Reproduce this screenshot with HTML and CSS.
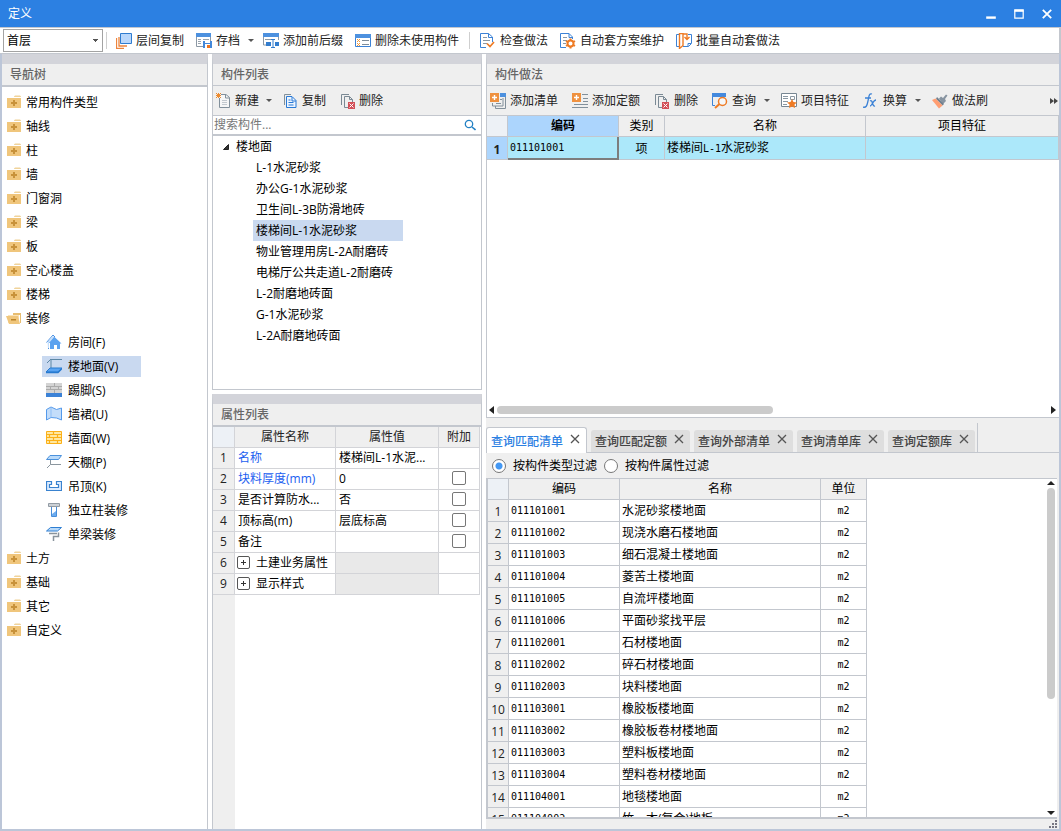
FILE: index.html
```html
<!DOCTYPE html>
<html lang="zh-CN">
<head>
<meta charset="utf-8">
<title>定义</title>
<link rel="stylesheet" href="styles.css">
</head>
<body>
<svg class="sprite" aria-hidden="true">
  <symbol id="folder" viewBox="0 0 16 16"><path d="M8 2.500l1-1h5l1 1V3H8z" fill="#f0d39b"/><path d="M1 4h14v10H1z" fill="#f0c67c"/><path d="M7 6h2v2h2v2H9v2H7v-2H5V8h2z" fill="#c8923a"/></symbol>
  <symbol id="folder-open" viewBox="0 0 16 16"><path d="M7 3h8v10h-1V5H7z" fill="#e8bd70"/><path d="M2 5h11v8H2z" fill="#fae3b8"/><path d="M0 6h12l2 8H3z" fill="#f0c67c"/><path d="M5 9h5v1.500H5z" fill="#b98328"/></symbol>
  <symbol id="house" viewBox="0 0 16 16"><path d="M.5 8.500L7 1l2 2M2.500 7v8" fill="none" stroke="#4a90e2"/><path d="M3 8L8 2.500 15.500 9.500H14V15h-3v-4H8v4H4V9H2z" fill="#5ca2ef"/><path d="M1.500 8L7 2l1 1-5 6v5H2z" fill="#c5dffc"/></symbol>
  <symbol id="floor" viewBox="0 0 16 16"><path d="M5 10V1.500h11M5 1L1 5" fill="none" stroke="#5d87a5"/><path d="M4 10h12l-4 4H0z" fill="#5aa4f3" stroke="#277ad0"/><path d="M0 14.500h12l4-4" fill="none" stroke="#277ad0" stroke-width="1.500"/></symbol>
  <symbol id="skirting" viewBox="0 0 16 16"><path d="M0 1h16v10H0z" fill="#d4d4d4"/><path d="M0 4.500h16M0 7.500h16M8.500 1v3M4.500 5v3M12.500 5v3M8.500 8v3" stroke="#aaa"/><path d="M0 11h16v4H0z" fill="#3c82d6"/></symbol>
  <symbol id="dado" viewBox="0 0 16 16"><path d="M.5 3.500L5 1l5.500 2.500 5-1.500v12l-5-2L5 11.500.5 14z" fill="#c3ddfa" stroke="#559aeb"/><path d="M5 1.500v10" stroke="#8fbff5"/></symbol>
  <symbol id="brick" viewBox="0 0 16 16"><path d="M.5 1.500h15v12H.5z" fill="#ffe8a2" stroke="#fbb018"/><path d="M1 4.500h14M1 7.500h14M1 10.500h14M7.500 1v3M3.500 5v3M11.500 5v3M7.500 8v3M3.500 11v3M11.500 11v3" stroke="#fbb018" stroke-width="1.200"/></symbol>
  <symbol id="ceiling" viewBox="0 0 16 16"><path d="M4 1.500h11.500l-3 4H.5z" fill="#b9dafa" stroke="#4b91dc"/><path d="M4.500 6v4.500H15M4.500 10.500L1 14" fill="none" stroke="#8b969e"/></symbol>
  <symbol id="suspend" viewBox="0 0 16 16"><path d="M.5 3.500h5v3h-2v3h9v-3h-2v-3h5v9H.5z" fill="#dcecff" stroke="#3982cf" stroke-width="1.200"/></symbol>
  <symbol id="column" viewBox="0 0 16 16"><path d="M2.500 1.500h11v3h-11z" fill="#ccd1d6" stroke="#929ba4"/><path d="M5.500 5v9.500h5V5" fill="#fff" stroke="#478dd8"/><path d="M6 12l4-3v5H6z" fill="#6dacef"/></symbol>
  <symbol id="beam" viewBox="0 0 16 16"><path d="M4.500 1.500h11l-4 3.500H.5z" fill="#b9dafa" stroke="#2e7ed2"/><path d="M3 7.500h8M12.500 6.500v4h-5V15" fill="none" stroke="#89939c" stroke-width="1.500"/></symbol>
  <symbol id="layers" viewBox="0 0 16 16"><path d="M.5 5v10.500H8M3 4v9h8" fill="none" stroke="#ed843c" stroke-width="1.300"/><path d="M4.500.5h11v10h-11z" fill="#b9d7fb" stroke="#2f7cd0"/></symbol>
  <symbol id="archive" viewBox="0 0 16 16"><path d="M0 0h15v4H0z" fill="#4d91df"/><path d="M.5 4v9.500H8M14.500 4v4" fill="none" stroke="#8c98a4"/><path d="M2 6.500h3M7 6.500h6M2 8.500h3M2 10.500h3" stroke="#9aa4ae"/><path d="M7 8h9v7H7z" fill="#4388d9"/><path d="M9 8h5v2H9z" fill="#fff"/><path d="M9 11h5v4H9z" fill="#fff"/><path d="M11 12h3v3h-3z" fill="#ef731c"/></symbol>
  <symbol id="affix" viewBox="0 0 16 16"><path d="M0 0h16v4H0z" fill="#4d91df"/><path d="M.5 4v8H3M15.500 4v3" fill="none" stroke="#8c98a4"/><path d="M2 6.500h6" stroke="#8c98a4"/><path d="M3 9h5v4H3zM12 9h4v4h-4z" fill="#337dce"/><path d="M8 6.500h4M8 14.500h4M10 6v9" stroke="#337dce"/></symbol>
  <symbol id="unused" viewBox="0 0 16 16"><path d="M.5 1.500h15v12H.5z" fill="#fff" stroke="#3c82d6"/><path d="M0 1h16v4H0z" fill="#4d91df"/><path d="M2 6l3 3M5 6L2 9M2 10l3 3M5 10l-3 3" stroke="#f19a3d"/><path d="M7 7.500h7M7 11.500h7" stroke="#7f8d99"/></symbol>
  <symbol id="check" viewBox="0 0 16 16"><path d="M12.500 9V4l-4-3.500h-8v14H6M8.500.5V4.500h4" fill="#fff" stroke="#3c82d6"/><path d="M3 4.500h4M3 7.500h7M3 10.500h4" stroke="#8c98a4"/><path d="M7 10.500l3 3 4-4.500" fill="none" stroke="#ee7b25" stroke-width="1.700"/></symbol>
  <symbol id="gear" viewBox="0 0 16 16"><path d="M12.500 6V4L9 .5H.5v14H6M9 .5V4.500h4" fill="#fff" stroke="#3c82d6"/><path d="M3 4.500h4M3 7.500h4M3 10.500h3" stroke="#8c98a4"/><path d="M10.500 5.500v10M6 8l9 5M15 8l-9 5" stroke="#ee7b25" stroke-width="2"/><circle cx="10.500" cy="10.500" r="3" fill="#fff" stroke="#ee7b25" stroke-width="2"/></symbol>
  <symbol id="batch" viewBox="0 0 16 16"><path d="M4 1.500H.5v12H4M12 1.500h3.500v9l-3 3H7" fill="#fff" stroke="#3c82d6"/><path d="M15 10.500h-3v3" fill="none" stroke="#3c82d6"/><path d="M3.500.5H7v12l-3.500 3zM7 1h4v5M8.500 4L11 6.500 13.500 4" fill="none" stroke="#ee7b25" stroke-width="1.400"/></symbol>
  <symbol id="new" viewBox="0 0 16 16"><path d="M3.500 5v9.500h10v-10L10 1.500H5" fill="#f7f7f7" stroke="#82909b"/><path d="M9.500 1v4h4" fill="none" stroke="#82909b"/><path d="M6 7.500h5M6 9.500h5M6 11.500h5" stroke="#c3c9cf"/><path d="M0 0l5 5M5 0L0 5M2.500 0v5M0 2.500h5" stroke="#ed8a2e"/></symbol>
  <symbol id="copy" viewBox="0 0 16 16"><path d="M1.500 12V1.500H8" fill="none" stroke="#82909b"/><path d="M3.500 3.500H9l4 4v7H3.500z" fill="#edf5ff" stroke="#2979d5"/><path d="M9 4v4h4M5.500 7h2M5.500 9.500h5M5.500 12h5" fill="none" stroke="#2979d5"/></symbol>
  <symbol id="delete" viewBox="0 0 16 16"><path d="M1.500 12V1.500H9M8 14.500H4.500v-11h5l3 3V9M9.500 3.500v3h3" fill="none" stroke="#7a8994"/><path d="M8 9h7v7H8z" fill="#d35058"/><path d="M9.500 10.500l4 4M13.500 10.500l-4 4" stroke="#fff"/></symbol>
  <symbol id="add-list" viewBox="0 0 16 16"><path d="M10 0h6v4h-6z" fill="#4d91df"/><path d="M15.500 4v11.500H5.500V13M2.500 10v3H13V5M10 6.500h2M6 10.500h5" fill="none" stroke="#82909b"/><path d="M0 0h9v9H0z" fill="#ef913f"/><path d="M2 4.500h5M4.500 2v5" stroke="#fff" stroke-width="1.400"/></symbol>
  <symbol id="add-quota" viewBox="0 0 16 16"><path d="M10 1.500h6M11 5.500h5M11 8.500h5M2 11.500h14M0 14.500h16" stroke="#82909b"/><path d="M0 0h9v9H0z" fill="#ef913f"/><path d="M2 4.500h5M4.500 2v5" stroke="#fff" stroke-width="1.400"/></symbol>
  <symbol id="query" viewBox="0 0 16 16"><path d="M3 12.500H.5V1h13v3" fill="none" stroke="#3c82d6"/><path d="M0 0h14v4H0z" fill="#4389de"/><circle cx="10.500" cy="8.500" r="4" fill="#f5f7f8" stroke="#ee7b25" stroke-width="1.500"/><path d="M7.500 11L3 15" stroke="#ee7b25" stroke-width="2"/></symbol>
  <symbol id="feature" viewBox="0 0 16 16"><path d="M.5.5h15v13H.5z" fill="#fff" stroke="#778692"/><path d="M2 3.500h5M2 5.500h5M2 8.500h5M2 11.500h4M9.500 3.500h4v3h-4z" fill="none" stroke="#8b98a3"/><path d="M11 6l1.500 3 3.500.5-2.500 2 .5 3.500-3-1.500L8 15l.5-3.500L6 9.500 9.500 9z" fill="#ee7b25"/></symbol>
  <symbol id="fx" viewBox="0 0 16 16"><path d="M9 1C6 0 6 3 5 8s-2 7-5 6M2 5h6M7 8c3-2 2 6 5 5M13 7c-3 0-4 6-6 6" fill="none" stroke="#3c82d6" stroke-width="1.300"/></symbol>
  <symbol id="brush" viewBox="0 0 16 16"><path d="M7 5.500l2-2L11 5l3-3.500 1.500 1L13 6l1 2-3 3z" fill="#8794a1"/><path d="M5 4l7 7-1.500 1.500L4 6z" fill="#71808e"/><path d="M3.500 5.500l7 7L7 15.500 0 7z" fill="#ff9e72"/></symbol>
  <symbol id="close" viewBox="0 0 10 10"><path d="M1 1l8 8M9 1L1 9" stroke="currentColor" stroke-width="1.300"/></symbol>
</svg>

<div class="window">
  <header class="titlebar">
    <span class="title">定义</span>
    <button class="win-btn" aria-label="最小化"><svg viewBox="0 0 10 10"><path d="M1 8h8" stroke="#fff" stroke-width="2"/></svg></button>
    <button class="win-btn" aria-label="最大化"><svg viewBox="0 0 10 10"><path d="M1.500 2.500h7v6h-7z" fill="none" stroke="#fff"/><path d="M1 2h8" stroke="#fff" stroke-width="2"/></svg></button>
    <button class="win-btn" aria-label="关闭"><svg viewBox="0 0 10 10"><path d="M1.500 1.500l7 7M8.500 1.500l-7 7" stroke="#fff" stroke-width="1.500"/></svg></button>
  </header>

  <div class="toolbar main-toolbar">
    <select class="floor-select" aria-label="楼层"><option>首层</option></select>
    <span class="sep"></span>
    <button class="tool"><svg><use href="#layers"/></svg>层间复制</button>
    <button class="tool drop"><svg><use href="#archive"/></svg>存档</button>
    <button class="tool"><svg><use href="#affix"/></svg>添加前后缀</button>
    <button class="tool"><svg><use href="#unused"/></svg>删除未使用构件</button>
    <span class="sep"></span>
    <button class="tool"><svg><use href="#check"/></svg>检查做法</button>
    <button class="tool"><svg><use href="#gear"/></svg>自动套方案维护</button>
    <button class="tool"><svg><use href="#batch"/></svg>批量自动套做法</button>
  </div>

  <main class="workspace">
    <nav class="panel nav-panel">
      <h2 class="panel-title ruled">导航树</h2>
      <ul class="nav-tree">
        <li><svg><use href="#folder"/></svg>常用构件类型</li>
        <li><svg><use href="#folder"/></svg>轴线</li>
        <li><svg><use href="#folder"/></svg>柱</li>
        <li><svg><use href="#folder"/></svg>墙</li>
        <li><svg><use href="#folder"/></svg>门窗洞</li>
        <li><svg><use href="#folder"/></svg>梁</li>
        <li><svg><use href="#folder"/></svg>板</li>
        <li><svg><use href="#folder"/></svg>空心楼盖</li>
        <li><svg><use href="#folder"/></svg>楼梯</li>
        <li><svg><use href="#folder-open"/></svg>装修</li>
        <li class="sub"><span><svg><use href="#house"/></svg>房间(F)</span></li>
        <li class="sub"><span class="selected"><svg><use href="#floor"/></svg>楼地面(V)</span></li>
        <li class="sub"><span><svg><use href="#skirting"/></svg>踢脚(S)</span></li>
        <li class="sub"><span><svg><use href="#dado"/></svg>墙裙(U)</span></li>
        <li class="sub"><span><svg><use href="#brick"/></svg>墙面(W)</span></li>
        <li class="sub"><span><svg><use href="#ceiling"/></svg>天棚(P)</span></li>
        <li class="sub"><span><svg><use href="#suspend"/></svg>吊顶(K)</span></li>
        <li class="sub"><span><svg><use href="#column"/></svg>独立柱装修</span></li>
        <li class="sub"><span><svg><use href="#beam"/></svg>单梁装修</span></li>
        <li><svg><use href="#folder"/></svg>土方</li>
        <li><svg><use href="#folder"/></svg>基础</li>
        <li><svg><use href="#folder"/></svg>其它</li>
        <li><svg><use href="#folder"/></svg>自定义</li>
      </ul>
    </nav>

    <div class="middle">
      <section class="panel list-panel">
        <h2 class="panel-title">构件列表</h2>
        <div class="toolbar panel-toolbar narrow">
          <button class="tool drop"><svg><use href="#new"/></svg>新建</button>
          <button class="tool"><svg><use href="#copy"/></svg>复制</button>
          <button class="tool"><svg><use href="#delete"/></svg>删除</button>
        </div>
        <div class="search">
          <input type="text" placeholder="搜索构件..." aria-label="搜索构件">
          <svg viewBox="0 0 12 12"><circle cx="5" cy="5" r="3.700" fill="none" stroke="#2381c4" stroke-width="1.300"/><path d="M8 8l3.500 3" stroke="#2381c4" stroke-width="1.600"/></svg>
        </div>
        <ul class="component-tree">
          <li class="root"><svg viewBox="0 0 8 8"><path d="M6.500 1.500v5h-5z" fill="#333" stroke="#222"/></svg>楼地面</li>
          <li><span>L-1水泥砂浆</span></li>
          <li><span>办公G-1水泥砂浆</span></li>
          <li><span>卫生间L-3B防滑地砖</span></li>
          <li><span class="selected">楼梯间L-1水泥砂浆</span></li>
          <li><span>物业管理用房L-2A耐磨砖</span></li>
          <li><span>电梯厅公共走道L-2耐磨砖</span></li>
          <li><span>L-2耐磨地砖面</span></li>
          <li><span>G-1水泥砂浆</span></li>
          <li><span>L-2A耐磨地砖面</span></li>
        </ul>
      </section>

      <section class="panel prop-panel">
        <h2 class="panel-title ruled">属性列表</h2>
        <div class="prop-body">
          <table class="props">
            <colgroup><col class="c-num"><col class="c-name"><col class="c-value"><col class="c-extra"></colgroup>
            <thead><tr><th class="corner"></th><th>属性名称</th><th>属性值</th><th>附加</th></tr></thead>
            <tbody>
              <tr><th>1</th><td class="link">名称</td><td>楼梯间L-1水泥...</td><td></td></tr>
              <tr><th>2</th><td class="link">块料厚度(mm)</td><td>0</td><td class="center"><input type="checkbox" aria-label="块料厚度附加"></td></tr>
              <tr><th>3</th><td>是否计算防水...</td><td>否</td><td class="center"><input type="checkbox" aria-label="是否计算防水附加"></td></tr>
              <tr><th>4</th><td>顶标高(m)</td><td>层底标高</td><td class="center"><input type="checkbox" aria-label="顶标高附加"></td></tr>
              <tr><th>5</th><td>备注</td><td></td><td class="center"><input type="checkbox" aria-label="备注附加"></td></tr>
              <tr><th>6</th><td class="group"><button class="expand" aria-label="展开土建业务属性"></button>土建业务属性</td><td class="disabled"></td><td></td></tr>
              <tr><th>9</th><td class="group"><button class="expand" aria-label="展开显示样式"></button>显示样式</td><td class="disabled"></td><td></td></tr>
            </tbody>
          </table>
        </div>
      </section>
    </div>

    <div class="right">
      <section class="panel method-panel">
        <h2 class="panel-title">构件做法</h2>
        <div class="toolbar panel-toolbar wide">
          <button class="tool"><svg><use href="#add-list"/></svg>添加清单</button>
          <button class="tool"><svg><use href="#add-quota"/></svg>添加定额</button>
          <button class="tool"><svg><use href="#delete"/></svg>删除</button>
          <button class="tool drop"><svg><use href="#query"/></svg>查询</button>
          <button class="tool"><svg><use href="#feature"/></svg>项目特征</button>
          <button class="tool drop"><svg><use href="#fx"/></svg>换算</button>
          <button class="tool"><svg><use href="#brush"/></svg>做法刷</button>
          <button class="more" aria-label="更多"><svg viewBox="0 0 8 6"><path d="M0 0l4 3-4 3zM4 0l4 3-4 3z" fill="#444"/></svg></button>
        </div>
        <table class="grid method-grid">
          <colgroup><col class="c-num"><col class="c-code"><col class="c-unit"><col class="c-name"><col></colgroup>
          <thead><tr><th class="corner"></th><th class="current">编码</th><th>类别</th><th>名称</th><th>项目特征</th></tr></thead>
          <tbody><tr><th>1</th><td class="code active-cell">011101001</td><td class="center">项</td><td>楼梯间<span class="code">L-1</span>水泥砂浆</td><td></td></tr></tbody>
        </table>
        <div class="hscroll">
          <svg viewBox="0 0 5 8"><path d="M5 0v8L0 4z" fill="#222"/></svg>
          <div class="track"><div class="thumb"></div></div>
          <svg viewBox="0 0 5 8"><path d="M0 0v8l5-4z" fill="#222"/></svg>
        </div>
      </section>

      <section class="query-panel">
        <div class="tabs">
          <div class="tab-set">
            <div class="tab active"><button>查询匹配清单</button><button class="tab-close" aria-label="关闭"><svg><use href="#close"/></svg></button></div>
            <div class="tab"><button>查询匹配定额</button><button class="tab-close" aria-label="关闭"><svg><use href="#close"/></svg></button></div>
            <div class="tab"><button>查询外部清单</button><button class="tab-close" aria-label="关闭"><svg><use href="#close"/></svg></button></div>
            <div class="tab"><button>查询清单库</button><button class="tab-close" aria-label="关闭"><svg><use href="#close"/></svg></button></div>
            <div class="tab"><button>查询定额库</button><button class="tab-close" aria-label="关闭"><svg><use href="#close"/></svg></button></div>
          </div>
        </div>
        <div class="filters">
          <label><input type="radio" name="filter" checked>按构件类型过滤</label>
          <label><input type="radio" name="filter">按构件属性过滤</label>
        </div>
        <div class="query-body">
          <div class="query-scroll">
            <table class="grid query-grid">
              <colgroup><col class="c-num"><col class="c-code"><col class="c-name"><col class="c-unit"></colgroup>
              <thead><tr><th class="corner"></th><th>编码</th><th>名称</th><th>单位</th></tr></thead>
              <tbody>
                <tr><th>1</th><td class="code">011101001</td><td>水泥砂浆楼地面</td><td class="code center">m2</td></tr>
                <tr><th>2</th><td class="code">011101002</td><td>现浇水磨石楼地面</td><td class="code center">m2</td></tr>
                <tr><th>3</th><td class="code">011101003</td><td>细石混凝土楼地面</td><td class="code center">m2</td></tr>
                <tr><th>4</th><td class="code">011101004</td><td>菱苦土楼地面</td><td class="code center">m2</td></tr>
                <tr><th>5</th><td class="code">011101005</td><td>自流坪楼地面</td><td class="code center">m2</td></tr>
                <tr><th>6</th><td class="code">011101006</td><td>平面砂浆找平层</td><td class="code center">m2</td></tr>
                <tr><th>7</th><td class="code">011102001</td><td>石材楼地面</td><td class="code center">m2</td></tr>
                <tr><th>8</th><td class="code">011102002</td><td>碎石材楼地面</td><td class="code center">m2</td></tr>
                <tr><th>9</th><td class="code">011102003</td><td>块料楼地面</td><td class="code center">m2</td></tr>
                <tr><th>10</th><td class="code">011103001</td><td>橡胶板楼地面</td><td class="code center">m2</td></tr>
                <tr><th>11</th><td class="code">011103002</td><td>橡胶板卷材楼地面</td><td class="code center">m2</td></tr>
                <tr><th>12</th><td class="code">011103003</td><td>塑料板楼地面</td><td class="code center">m2</td></tr>
                <tr><th>13</th><td class="code">011103004</td><td>塑料卷材楼地面</td><td class="code center">m2</td></tr>
                <tr><th>14</th><td class="code">011104001</td><td>地毯楼地面</td><td class="code center">m2</td></tr>
                <tr><th>15</th><td class="code">011104002</td><td>竹、木(复合)地板</td><td class="code center">m2</td></tr>
              </tbody>
            </table>
          </div>
          <div class="vscroll">
            <svg viewBox="0 0 8 4"><path d="M0 4h8L4 0z" fill="#222"/></svg>
            <div class="track"><div class="thumb"></div></div>
            <svg viewBox="0 0 8 4"><path d="M0 0h8L4 4z" fill="#222"/></svg>
          </div>
        </div>
        <footer class="status"><svg viewBox="0 0 8 8"><path d="M6 0h2v2H6zM3 3h2v2H3zM6 3h2v2H6zM0 6h2v2H0zM3 6h2v2H3zM6 6h2v2H6z" fill="#777682"/></svg></footer>
      </section>
    </div>
  </main>
</div>
</body>
</html>
```
FILE: styles.css
```css
:root {
  --blue: #2c80e2;
  --line: #c3c7ce;
  --face: #efefef;
  --strip: #d3d4da;
  --select: #c9d9f0;
  --frame: #bcc6d8;
}
* { box-sizing: border-box; }
body {
  margin: 0;
  font: 12px/18px "Open Sans", "Noto Sans CJK SC", sans-serif;
  color: #000;
  background: #fff;
}
button, input, select { font: inherit; color: inherit; }
button { padding: 0; border: 0; background: none; white-space: nowrap; }
h2, ul { margin: 0; padding: 0; }
ul { list-style: none; }
svg { display: block; flex: none; }
.sprite { position: absolute; width: 0; height: 0; }

.window {
  display: flex;
  flex-direction: column;
  height: 100vh;
  overflow: hidden;
}
.titlebar {
  display: flex;
  align-items: center;
  flex: none;
  height: 27px;
  padding: 0 8px;
  gap: 16px;
  background: var(--blue);
  color: #fff;
}
.title { flex: 1; }
.win-btn { width: 12px; height: 12px; }
.win-btn svg { width: 12px; height: 12px; }

.toolbar { display: flex; align-items: center; flex: none; overflow: hidden; }
.tool {
  display: flex;
  align-items: center;
  gap: 4px;
  color: #222;
}
.tool svg { width: 16px; height: 16px; }
.drop { margin-right: -3px; }
.drop::after {
  content: "";
  margin-left: 4px;
  border: 3px solid transparent;
  border-top-color: #555;
  border-bottom: 0;
}
.main-toolbar {
  height: 27px;
  gap: 12px;
  padding-left: 3px;
  border: 1px solid var(--line);
  border-width: 1px 2px 1px 0;
}
.main-toolbar .sep { width: 1px; height: 17px; margin: 0 -2px; background: #cfcfcf; }
.main-toolbar .floor-select + .sep { margin: 0 -3px 0 -9px; }
.floor-select {
  width: 100px;
  height: 23px;
  padding: 0 3px;
  border: 1px solid #a3a3a3;
  border-radius: 0;
  appearance: none;
  background: linear-gradient(#555, #555) no-repeat right 6px top 11px / 1px 1px,
              linear-gradient(#555, #555) no-repeat right 5px top 10px / 3px 1px,
              linear-gradient(#555, #555) no-repeat right 4px top 9px / 5px 1px,
              #fff;
}

.workspace {
  display: grid;
  grid-template-columns: 206px 270px minmax(0, 1fr);
  gap: 4px;
  flex: 1;
  min-height: 0;
  border: solid var(--frame);
  border-width: 0 2px 2px;
}
.panel {
  display: flex;
  flex-direction: column;
  min-height: 0;
  border: 1px solid var(--line);
  border-top: 10px solid var(--strip);
  background: #fff;
}
.panel-title {
  flex: none;
  height: 22px;
  padding-left: 8px;
  border-bottom: 1px solid var(--line);
  background: var(--face);
  color: #666;
  font-size: 12px;
  font-weight: 500;
  line-height: 22px;
}
.panel-title.ruled { height: 23px; border-bottom-width: 2px; }
.nav-panel { border-left: 0; border-bottom: 0; }
.nav-tree { padding-top: 3px; }
.nav-tree li {
  display: flex;
  align-items: center;
  gap: 4px;
  height: 24px;
  padding: 2px 0 0 4px;
}
.nav-tree svg { width: 16px; height: 16px; margin-bottom: 2px; }
.nav-tree .sub { padding: 0 0 0 40px; }
.sub span {
  display: flex;
  align-items: center;
  gap: 6px;
  width: 99px;
  height: 21px;
  padding: 2px 0 0 4px;
}
.selected { background: var(--select); }

.middle, .right { display: grid; min-width: 0; min-height: 0; }
.middle { grid-template-rows: minmax(0, 336fr) minmax(0, 435fr); gap: 4px; }
.right { grid-template-rows: minmax(0, 364fr) minmax(0, 411fr); }
.prop-panel { border-bottom: 0; }
.panel-toolbar {
  height: 30px;
  gap: 14px;
  padding-left: 3px;
  border-bottom: 1px solid var(--line);
  background: var(--face);
}
.narrow .tool { gap: 3px; }
.search {
  display: flex;
  align-items: center;
  flex: none;
  height: 20px;
  padding: 0 5px 0 1px;
  border-bottom: 2px solid var(--line);
}
.search input { flex: 1; min-width: 0; padding: 0; border: 0; outline: 0; }
.search input::placeholder { color: #777; }
.search svg { width: 12px; height: 12px; }
.component-tree li { display: flex; height: 21px; padding-left: 40px; line-height: 21px; }
.component-tree span { min-width: 150px; padding-left: 3px; }
.component-tree .root { align-items: center; gap: 6px; padding-left: 9px; }
.root svg { width: 8px; height: 8px; }

table { border-collapse: separate; border-spacing: 0; table-layout: fixed; }
th, td {
  overflow: hidden;
  padding: 0 3px;
  border: solid var(--line);
  border-width: 0 1px 1px 0;
  font-weight: 400;
  text-align: left;
  white-space: nowrap;
}
th { padding: 0; background: var(--face); color: #222; text-align: center; }
.center { text-align: center; }
.corner { background: #edf1f6; }

.prop-body {
  flex: 1;
  overflow: hidden;
  background: linear-gradient(var(--face), var(--face)) no-repeat 0 0 / 22px 100%;
}
.props { width: 267px; }
.props .c-num { width: 22px; }
.props .c-name { width: 101px; }
.props .c-value { width: 103px; }
.props th, .props td { height: 21px; border-color: #d3d4d8; line-height: 20px; }
.props .link { color: #1b60f0; }
.props .disabled { background: #e9e9e9; }
.props input {
  display: block;
  width: 14px;
  height: 14px;
  margin: 0 auto 2px;
  border: 1px solid #777;
  border-radius: 2px;
  appearance: none;
  background: #fff;
}
.expand {
  width: 13px;
  height: 13px;
  margin: 0 6px 0 -1px;
  border: 1px solid #555;
  border-radius: 2px;
  vertical-align: -1px;
  background: linear-gradient(#333, #333) no-repeat center / 5px 1px,
              linear-gradient(#333, #333) no-repeat center / 1px 5px,
              #fff;
}

.method-panel { border-right: 0; }
.more { margin: 0 1px 0 auto; }
.more svg { width: 8px; height: 6px; }
.grid td { height: 22px; padding: 0 2px; line-height: 21px; }
.grid .c-num { width: 21px; }
.grid .c-code { width: 111px; }
.grid .c-name { width: 201px; }
.grid .c-unit { width: 46px; }
.grid thead th { height: 21px; color: #000; line-height: 20px; }
.grid tbody th { padding-top: 2px; font-size: 12px; line-height: 19px; }
.grid .code { font-family: "DejaVu Sans Mono", "Noto Sans CJK SC", monospace; font-size: 10px; }
.method-grid { width: 100%; }
.method-grid td { background: #ace8fa; }
.method-grid .current { background: #acd5fd; font-weight: 700; }
.method-grid tbody th { background: #acd5fd; font-weight: 700; }
.method-grid .active-cell { border: solid #7d7d7d; border-width: 0 2px 2px 0; }
.hscroll {
  display: flex;
  align-items: center;
  gap: 3px;
  height: 14px;
  margin-top: auto;
  padding: 0 3px 0 2px;
}
.hscroll svg { width: 5px; height: 8px; }
.track { flex: 1; }
.thumb { border-radius: 4px; background: #cbcbcb; }
.hscroll .thumb { width: 50%; height: 8px; }

.query-panel {
  display: flex;
  flex-direction: column;
  min-height: 0;
  background: var(--face);
}
.tabs {
  flex: none;
  height: 35px;
  padding-top: 5px;
  border-bottom: 1px solid var(--line);
}
.tab-set {
  display: flex;
  align-items: flex-end;
  gap: 4px;
  width: max-content;
  height: 29px;
  padding-right: 2px;
  border-right: 1px solid var(--line);
}
.tab {
  display: flex;
  align-items: center;
  gap: 7px;
  height: 22px;
  padding: 2px 6px 0 4px;
  border-radius: 3px 3px 0 0;
  background: #dedede;
  color: #444;
  font-weight: 500;
}
.tab.active {
  height: 26px;
  margin-bottom: -1px;
  border: 1px solid var(--line);
  border-bottom: 0;
  background: #fff;
  color: var(--blue);
}
.tab-close { padding-bottom: 6px; color: #555; }
.tab-close svg { width: 10px; height: 10px; }
.filters {
  display: flex;
  align-items: center;
  gap: 7px;
  flex: none;
  height: 25px;
  padding-left: 6px;
}
.filters label { display: flex; align-items: center; gap: 7px; }
.filters input {
  width: 14px;
  height: 14px;
  margin: 0;
  border: 1px solid #777;
  border-radius: 50%;
  appearance: none;
  background: #fff;
}
.filters input:checked { background: radial-gradient(circle, #4498f3 3px, #fff 4px); }
.query-body {
  display: flex;
  flex: 1;
  min-height: 0;
  margin-right: 2px;
  border: solid var(--line);
  border-width: 1px 0 2px 2px;
  background: #fff;
}
.query-scroll { flex: 1; overflow: hidden; }
.query-grid { width: 379px; }
.vscroll { display: flex; flex-direction: column; gap: 3px; width: 12px; padding: 2px; }
.vscroll svg { width: 8px; height: 4px; }
.vscroll .track { display: flex; }
.vscroll .thumb { width: 8px; height: 66%; }
.status { display: flex; justify-content: flex-end; flex: none; height: 10px; padding: 1px 2px; }
.status svg { width: 8px; height: 8px; }
```
